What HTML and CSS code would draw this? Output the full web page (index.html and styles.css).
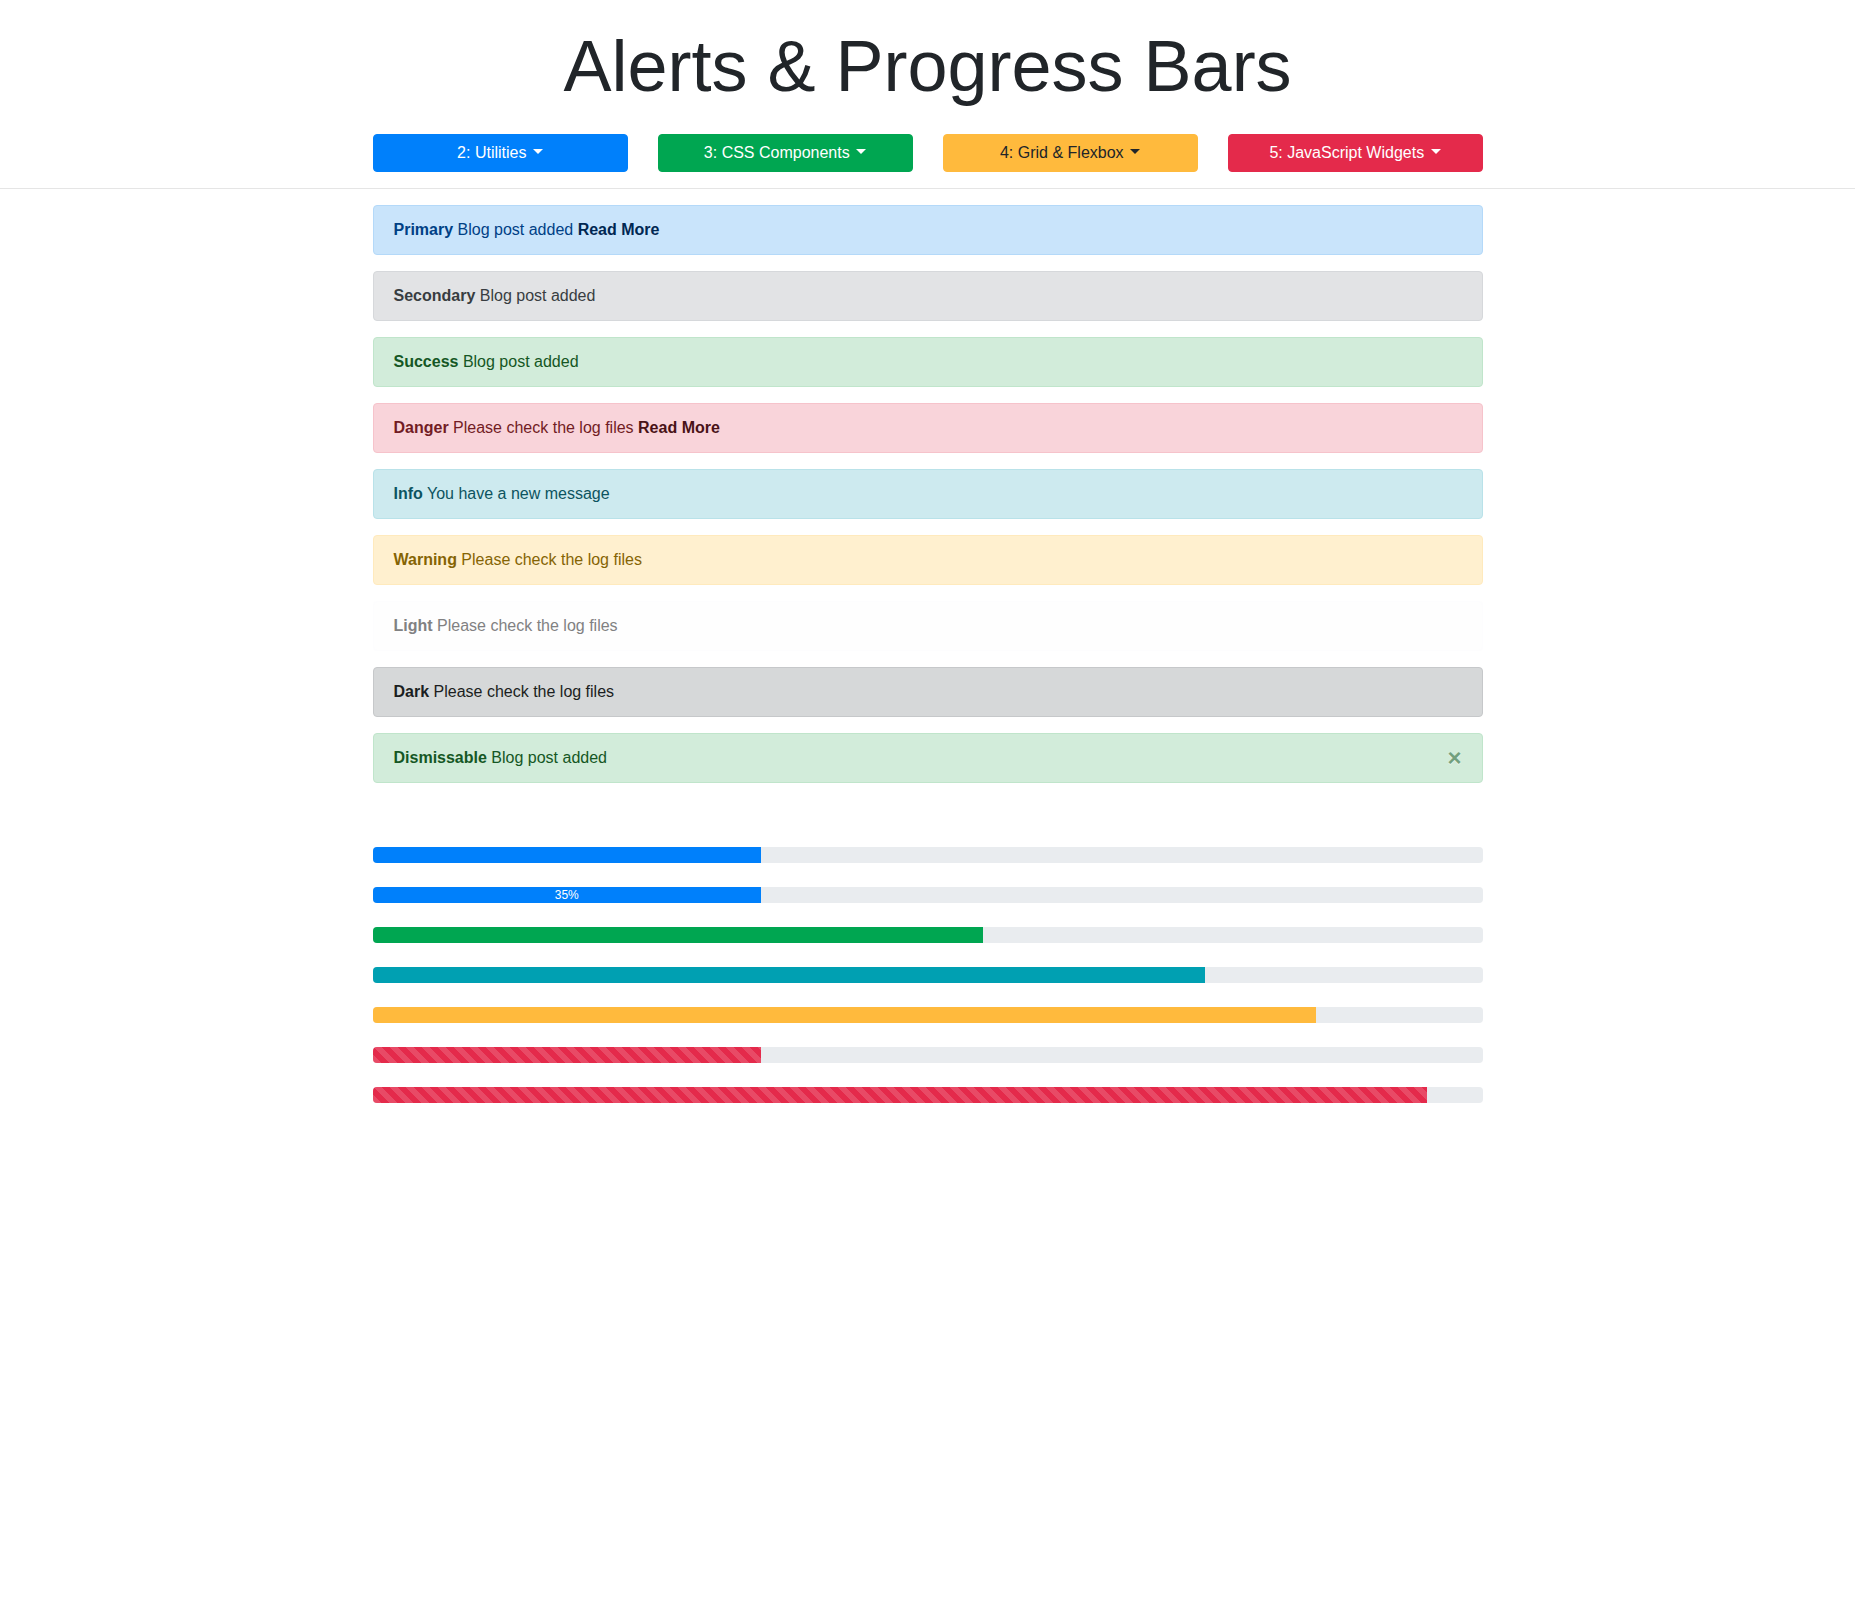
FILE: index.html
```html
<!DOCTYPE html>
<html lang="en">
<head>
<meta charset="utf-8">
<title>Alerts &amp; Progress Bars</title>
<link rel="stylesheet" href="styles.css">
</head>
<body>
<header class="header">
  <div class="container">
    <h1 class="title">Alerts &amp; Progress Bars</h1>
    <div class="nav-row">
      <button class="btn btn-primary">2: Utilities <span class="caret"></span></button>
      <button class="btn btn-success">3: CSS Components <span class="caret"></span></button>
      <button class="btn btn-warning">4: Grid &amp; Flexbox <span class="caret"></span></button>
      <button class="btn btn-danger">5: JavaScript Widgets <span class="caret"></span></button>
    </div>
  </div>
</header>
<main class="container main">
  <div class="alert alert-primary"><strong>Primary</strong> Blog post added <a class="alert-link" href="#">Read More</a></div>
  <div class="alert alert-secondary"><strong>Secondary</strong> Blog post added</div>
  <div class="alert alert-success"><strong>Success</strong> Blog post added</div>
  <div class="alert alert-danger"><strong>Danger</strong> Please check the log files <a class="alert-link" href="#">Read More</a></div>
  <div class="alert alert-info"><strong>Info</strong> You have a new message</div>
  <div class="alert alert-warning"><strong>Warning</strong> Please check the log files</div>
  <div class="alert alert-light"><strong>Light</strong> Please check the log files</div>
  <div class="alert alert-dark"><strong>Dark</strong> Please check the log files</div>
  <div class="alert alert-success alert-dismissible"><strong>Dismissable</strong> Blog post added<button class="close" type="button">&times;</button></div>

  <div class="progress-list">
    <div class="progress"><div class="bar bar-blue" style="width:35%"></div></div>
    <div class="progress"><div class="bar bar-blue" style="width:35%">35%</div></div>
    <div class="progress"><div class="bar bar-green" style="width:55%"></div></div>
    <div class="progress"><div class="bar bar-teal" style="width:75%"></div></div>
    <div class="progress"><div class="bar bar-yellow" style="width:85%"></div></div>
    <div class="progress"><div class="bar bar-red striped" style="width:35%"></div></div>
    <div class="progress"><div class="bar bar-red striped" style="width:95%"></div></div>
  </div>
</main>
</body>
</html>
```

FILE: styles.css
```css
* { box-sizing: border-box; }

body {
  margin: 0;
  font-family: "Liberation Sans", Arial, sans-serif;
  font-size: 16px;
  line-height: 1.5;
  color: #212529;
  background: #fff;
}

.container {
  width: 1140px;
  margin: 0 auto;
  padding: 0 15px;
}

.header {
  padding-top: 23px;
  padding-bottom: 16px;
  border-bottom: 1px solid #e5e5e5;
}

.title {
  margin: 0 0 25px;
  font-size: 72px;
  font-weight: 300;
  line-height: 1.2;
  text-align: center;
  color: #212529;
}

.nav-row {
  display: grid;
  grid-template-columns: repeat(4, 1fr);
  column-gap: 30px;
}

.btn {
  display: block;
  width: 100%;
  height: 38px;
  padding: 6px 12px;
  font-family: inherit;
  font-size: 16px;
  line-height: 24px;
  border: 1px solid transparent;
  border-radius: 4px;
  color: #fff;
  text-align: center;
  cursor: pointer;
}

.btn-primary { background: #0080fb; border-color: #0080fb; }
.btn-success { background: #00a651; border-color: #00a651; }
.btn-warning { background: #ffba3d; border-color: #ffba3d; color: #212529; }
.btn-danger { background: #e42a4b; border-color: #e42a4b; }

.caret {
  display: inline-block;
  margin-left: 2px;
  vertical-align: 4px;
  border-top: 5px solid currentColor;
  border-left: 5px solid transparent;
  border-right: 5px solid transparent;
}

.main {
  padding-top: 16px;
}

.alert {
  position: relative;
  padding: 12px 20px;
  margin-bottom: 16px;
  border: 1px solid transparent;
  border-radius: 4px;
}

.alert strong, .alert-link { font-weight: 700; }
.alert-link { text-decoration: none; }

.alert-primary { background: #c9e4fb; border-color: #b4d9f9; color: #004085; }
.alert-primary .alert-link { color: #002752; }
.alert-secondary { background: #e2e3e5; border-color: #d6d8db; color: #383d41; }
.alert-success { background: #d2ecda; border-color: #c0e5cb; color: #155724; }
.alert-danger { background: #f9d4da; border-color: #f6c3cb; color: #721c24; }
.alert-danger .alert-link { color: #491217; }
.alert-info { background: #cdeaef; border-color: #b9e2e9; color: #0c5460; }
.alert-warning { background: #fff0cf; border-color: #ffeabd; color: #856404; }
.alert-light { background: #fefefe; border-color: #fdfdfe; color: #818182; }
.alert-dark { background: #d6d8d9; border-color: #c6c8ca; color: #1b1e21; }

.alert-dismissible { padding-right: 64px; }

.close {
  position: absolute;
  top: 0;
  right: 0;
  padding: 12px 20px;
  background: transparent;
  border: 0;
  font-family: inherit;
  font-size: 24px;
  font-weight: 700;
  line-height: 1;
  color: inherit;
  opacity: 0.5;
  text-shadow: 0 1px 0 #fff;
  cursor: pointer;
}

.progress-list {
  padding-top: 48px;
}

.progress {
  display: flex;
  height: 16px;
  margin-bottom: 24px;
  overflow: hidden;
  background: #e9ecef;
  border-radius: 4px;
}

.bar {
  display: flex;
  justify-content: center;
  align-items: center;
  height: 100%;
  color: #fff;
  font-size: 12px;
  line-height: 1;
  white-space: nowrap;
}

.bar-blue { background-color: #0080fb; }
.bar-green { background-color: #00a651; }
.bar-teal { background-color: #00a0b2; }
.bar-yellow { background-color: #ffba3d; }
.bar-red { background-color: #e42a4b; }

.striped {
  background-image: linear-gradient(45deg,
    rgba(255,255,255,.15) 25%, transparent 25%,
    transparent 50%, rgba(255,255,255,.15) 50%,
    rgba(255,255,255,.15) 75%, transparent 75%, transparent);
  background-size: 16px 16px;
}
```
